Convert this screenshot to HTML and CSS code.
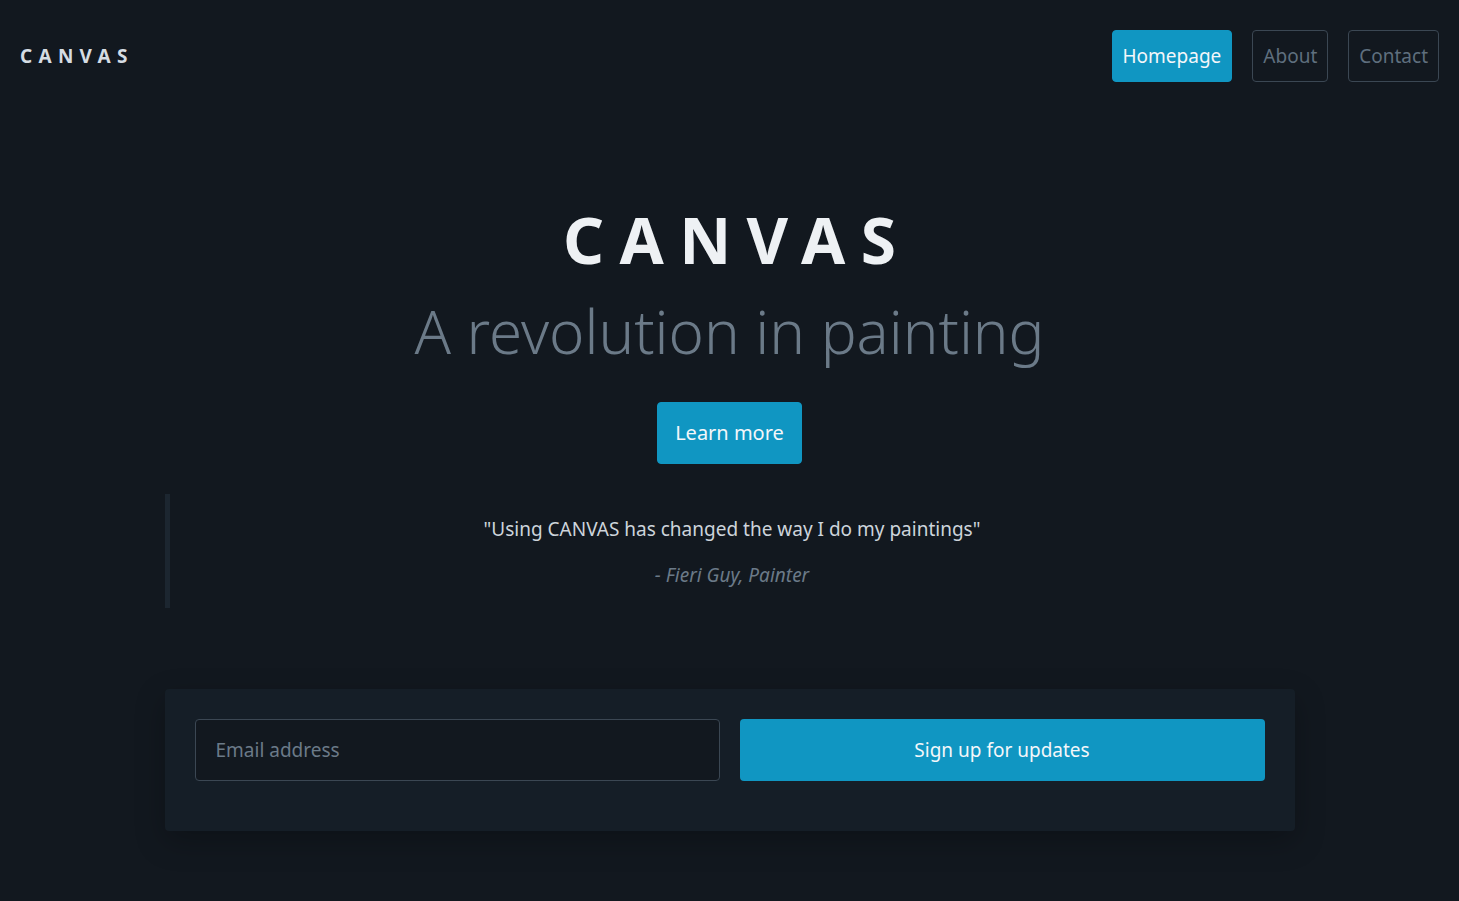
FILE: index.html
```html
<!DOCTYPE html>
<html lang="en">
<head>
<meta charset="utf-8">
<title>CANVAS</title>
<link rel="stylesheet" href="styles.css">
</head>
<body>
<header class="site-header">
  <div class="logo">CANVAS</div>
  <nav class="nav">
    <a class="btn btn-primary" href="#">Homepage</a>
    <a class="btn btn-outline" href="#">About</a>
    <a class="btn btn-outline" href="#">Contact</a>
  </nav>
</header>
<main class="main">
  <section class="hero">
    <h1 class="hero-title">CANVAS</h1>
    <p class="hero-sub">A revolution in painting</p>
    <a class="btn btn-primary btn-lg" href="#">Learn more</a>
  </section>
  <blockquote class="quote">
    <p class="quote-text">"Using CANVAS has changed the way I do my paintings"</p>
    <cite class="quote-cite">- Fieri Guy, Painter</cite>
  </blockquote>
  <form class="signup">
    <input class="signup-input" type="email" placeholder="Email address">
    <button class="signup-btn" type="button">Sign up for updates</button>
  </form>
</main>
</body>
</html>
```

FILE: styles.css
```css
html, body {
  margin: 0;
  padding: 0;
  height: 100%;
}
body {
  background: #12181f;
  font-family: "Noto Sans", "Open Sans", sans-serif;
  color: #c8d0d8;
}
.site-header {
  display: flex;
  justify-content: space-between;
  align-items: center;
  padding: 30px 20px 0 20px;
}
.logo {
  font-size: 19px;
  font-weight: 700;
  letter-spacing: 0.33em;
  color: #d5dce3;
}
.nav {
  display: flex;
  gap: 20px;
}
.btn {
  display: inline-block;
  font-size: 19px;
  line-height: 30px;
  padding: 10px 10px;
  border: 1px solid transparent;
  border-radius: 4px;
  text-decoration: none;
  font-family: inherit;
}
.btn-primary {
  background: #1096c2;
  border-color: #1096c2;
  color: #f4f7fa;
}
.btn-outline {
  border-color: #3b4753;
  color: #5f6f7e;
}
.main {
  width: 1130px;
  margin: 0 auto;
}
.hero {
  text-align: center;
  padding-top: 120px;
}
.hero-title {
  margin: 0;
  font-size: 64px;
  line-height: 76px;
  font-weight: 700;
  letter-spacing: 0.24em;
  padding-left: 0.24em;
  color: #eef1f4;
}
.hero-sub {
  margin: 18px 0 36px;
  font-size: 60px;
  line-height: 70px;
  font-weight: 300;
  color: #6b7a88;
}
.btn-lg {
  font-size: 20px;
  padding: 15px 17px;
}
.quote {
  margin: 30px 0 81px;
  border-left: 5px solid #1c2630;
  padding: 20px 0;
  text-align: center;
}
.quote-text {
  margin: 0 0 18px;
  font-size: 19px;
  line-height: 30px;
  color: #cdd4db;
}
.quote-cite {
  display: block;
  font-size: 19px;
  line-height: 26px;
  color: #6b7a88;
  font-style: italic;
}
.signup {
  display: grid;
  grid-template-columns: 1fr 1fr;
  gap: 20px;
  padding: 30px 30px 50px;
  background: #151e27;
  border-radius: 4px;
  box-shadow: 0 10px 30px rgba(0, 0, 0, 0.25);
}
.signup-input,
.signup-btn {
  width: 100%;
  min-width: 0;
  height: 62px;
  box-sizing: border-box;
  font-family: inherit;
  font-size: 19px;
  border-radius: 4px;
}
.signup-input {
  background: #12181f;
  border: 1px solid #3b4753;
  padding: 0 20px;
  color: #c8d0d8;
}
.signup-input::placeholder {
  color: #6b7a88;
}
.signup-btn {
  background: #1096c2;
  border: none;
  color: #f4f7fa;
}
```
